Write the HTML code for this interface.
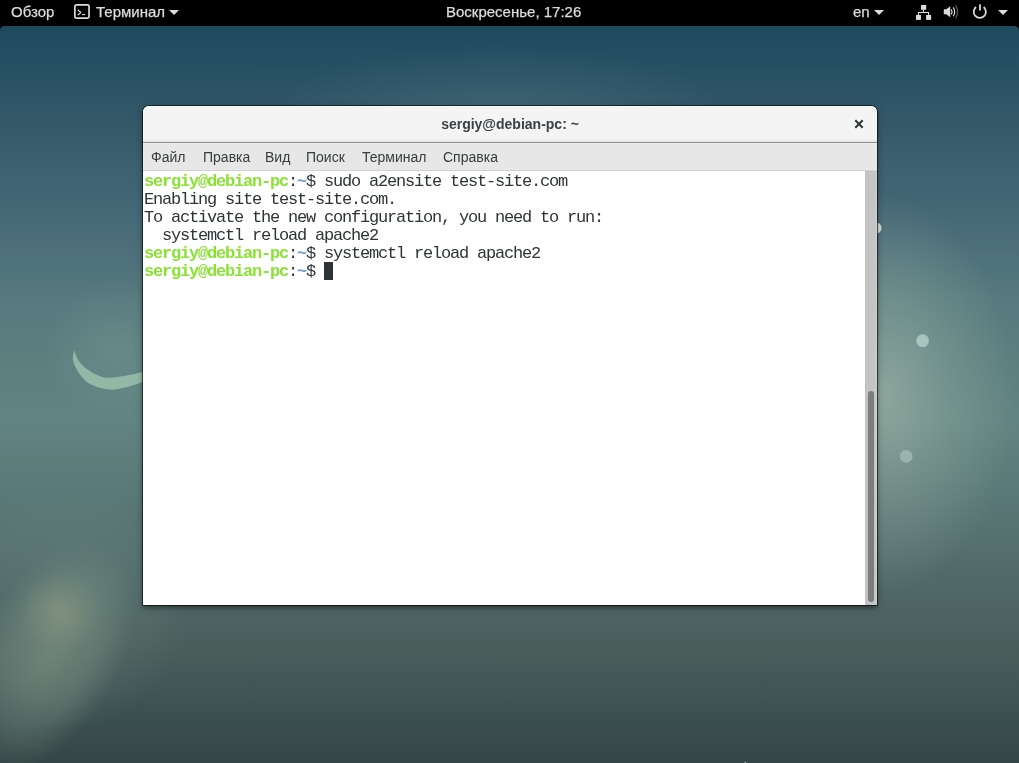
<!DOCTYPE html>
<html><head><meta charset="utf-8">
<style>
html,body{margin:0;padding:0;width:1019px;height:763px;overflow:hidden;background:#000;}
body{position:relative;font-family:"Liberation Sans",sans-serif;}
#bg{position:absolute;left:0;top:0;width:1019px;height:763px;overflow:hidden;
background:
radial-gradient(ellipse 135px 200px at 880px 395px,rgba(178,196,180,0.55) 0%,rgba(165,185,170,0.3) 50%,rgba(150,170,160,0) 100%),
radial-gradient(ellipse 230px 70px at 500px 115px,rgba(90,125,135,0.35) 0%,rgba(90,125,135,0) 100%),
linear-gradient(180deg,#1f4a5e 26px,#234d61 50px,#335969 120px,#446776 205px,#567a7e 300px,#628482 420px,#577473 520px,#4a5e5c 645px,#3f5353 700px,#344545 763px);}
.glow{position:absolute;border-radius:50%;}
#g1{left:-20px;top:530px;width:140px;height:250px;transform:rotate(28deg);background:radial-gradient(closest-side,rgba(140,160,140,0.5),rgba(130,155,140,0.32) 60%,rgba(130,155,140,0));}
#g2{left:20px;top:572px;width:80px;height:80px;background:radial-gradient(closest-side,rgba(185,178,135,0.28),rgba(185,178,135,0));}
#g4{left:45px;top:280px;width:140px;height:140px;background:radial-gradient(closest-side,rgba(150,185,175,0.2),rgba(150,185,175,0));}
#g3{left:-60px;top:480px;width:250px;height:250px;background:radial-gradient(closest-side,rgba(120,150,140,0.25),rgba(120,150,140,0.12) 70%,rgba(120,150,140,0));}
#corners{position:absolute;left:0;top:26px;width:1019px;height:8px;}
#panel{position:absolute;left:0;top:0;width:1019px;height:26px;background:#000;color:#dcdcdc;font-size:15px;-webkit-text-stroke:0.25px #dcdcdc;will-change:transform;}
.pt{position:absolute;top:4px;line-height:16px;white-space:nowrap;}
#win{position:absolute;left:143px;top:106px;width:734px;height:499px;background:#fff;border-radius:6px 6px 0 0;overflow:hidden;
box-shadow:0 0 0 1px rgba(0,0,0,0.55),0 3px 4px rgba(0,0,0,0.3),0 2px 8px rgba(0,0,0,0.25);will-change:transform;}
#title{position:absolute;left:0;top:0;width:734px;height:36px;background:linear-gradient(180deg,#f4f4f4 0,#f4f4f4 33px,#ececec 34px,#e2e2e2 36px);border-bottom:1px solid #8e8e8e;}
#ttext{position:absolute;left:0;width:734px;top:10px;text-align:center;font-weight:bold;font-size:14px;color:#3a3f41;line-height:16px;}
#menu{position:absolute;left:0;top:37px;width:734px;height:27px;background:linear-gradient(180deg,#ededed 0,#ededed 1px,#e7e7e7 1px,#e7e7e7 26px,#e9e9e9 26px);border-bottom:1px solid #d0d0d0;}
.mi{position:absolute;top:6px;font-size:14px;color:#373c3e;line-height:16px;}
#term{position:absolute;left:0;top:65px;width:722px;height:434px;background:#fff;}
#sb{position:absolute;left:722px;top:65px;width:12px;height:434px;background:linear-gradient(90deg,#bdbdbd 0,#c3c3c3 1px,#c5c5c5 10px,#cdd1d1 12px);}
#thumb{position:absolute;left:3px;top:220px;width:6px;height:211px;background:#7b7c7c;border-radius:3px;}
pre{margin:0;position:absolute;left:1px;top:2px;font-family:"Liberation Mono",monospace;font-size:17px;letter-spacing:-1.2px;line-height:18px;color:#2e3436;}
.g{color:#8ae234;font-weight:bold;}
.b{color:#729fcf;font-weight:bold;}
.cur{display:inline-block;width:9px;height:18px;vertical-align:top;position:relative;top:-1px;background:#2e3436;}
</style></head><body>
<div id="bg"><div class="glow" id="g3"></div><div class="glow" id="g4"></div><div class="glow" id="g1"></div><div class="glow" id="g2"></div><svg style="position:absolute;left:0;top:0" width="1019" height="763">
<path d="M74.2 350.2 C74.0 352.0 72.2 356.9 73.3 361.2 C74.4 365.5 78.0 371.9 81.1 375.9 C84.2 379.9 87.1 382.7 92.1 385.0 C97.1 387.3 104.9 389.4 111.0 389.6 C117.1 389.9 123.5 387.8 128.8 386.5 C134.1 385.2 140.6 382.8 143.0 382.0 L143.0 372.0 C139.9 372.7 130.7 375.1 124.2 376.0 C117.7 376.9 110.1 378.5 104.0 377.4 C97.9 376.3 91.8 372.5 87.5 369.6 C83.2 366.8 80.5 363.5 78.3 360.3 C76.1 357.1 74.9 351.9 74.2 350.2 Z" fill="#93b8a5"/>
<circle cx="876" cy="228" r="5.5" fill="#d5e2df"/>
<circle cx="922.6" cy="340.7" r="6.4" fill="#a9c3bf"/>
<circle cx="906.2" cy="456.4" r="6.3" fill="#9cb4ae"/>
<path d="M744.6 763 L745.2 761.3 L746 763 Z" fill="#cfd4d3"/>
</svg></div>
<svg id="corners" width="1019" height="8"><path d="M0 0 H4.5 A4.5 4.5 0 0 0 0 4.5 Z" fill="#000"/><path d="M1019 0 H1014.5 A4.5 4.5 0 0 1 1019 4.5 Z" fill="#000"/></svg>
<div id="panel">
  <div class="pt" style="left:11px;">Обзор</div>
  <svg style="position:absolute;left:74px;top:4px" width="16" height="15" viewBox="0 0 16 15">
    <rect x="0.85" y="0.85" width="14.2" height="13.3" rx="1.6" fill="none" stroke="#dcdcdc" stroke-width="1.7"/>
    <path d="M4.2 6.2 L6.8 8.5 L4.2 10.8" fill="none" stroke="#dcdcdc" stroke-width="1.2" stroke-linecap="round"/>
    <rect x="8" y="10" width="3.1" height="1.1" fill="#dcdcdc"/>
  </svg>
  <div class="pt" style="left:96px;">Терминал</div>
  <svg style="position:absolute;left:169px;top:10px" width="10" height="5"><path d="M0 0 L10 0 L5 5 Z" fill="#dcdcdc"/></svg>
  <div class="pt" style="left:446px;">Воскресенье, 17:26</div>
  <div class="pt" style="left:853px;">en</div>
  <svg style="position:absolute;left:874px;top:10px" width="10" height="5"><path d="M0 0 L10 0 L5 5 Z" fill="#dcdcdc"/></svg>
  <svg style="position:absolute;left:0;top:0" width="1019" height="26">
    <rect x="921" y="5" width="5.2" height="4.8" fill="#dcdcdc"/>
    <rect x="916" y="15" width="4.9" height="4.9" fill="#dcdcdc"/>
    <rect x="926.1" y="15" width="5" height="4.9" fill="#dcdcdc"/>
    <path d="M923.5 9.5 V12.5 M918.5 15 V12.5 H928.6 V15" fill="none" stroke="#dcdcdc" stroke-width="1.1"/>
    <path d="M943.8 9.3 H946.3 L950.2 6.3 V17.3 L946.3 14.3 H943.8 Z" fill="#dcdcdc"/>
    <path d="M951.3 9.2 Q952.8 11.8 951.3 14.4" fill="none" stroke="#dcdcdc" stroke-width="1.2"/>
    <path d="M953.3 7.4 Q956 11.8 953.3 16.2" fill="none" stroke="#dcdcdc" stroke-width="1.2"/>
    <path d="M955.6 5.4 Q959.6 11.8 955.6 18.2" fill="none" stroke="#5a5a5a" stroke-width="1.3"/>
    <path d="M976 7 A6.1 6.1 0 1 0 983.6 7" fill="none" stroke="#dcdcdc" stroke-width="1.8"/>
    <path d="M980 4.2 V10.6" fill="none" stroke="#dcdcdc" stroke-width="1.8"/>
  </svg>
  <svg style="position:absolute;left:998px;top:10px" width="10" height="5"><path d="M0 0 L10 0 L5 5 Z" fill="#dcdcdc"/></svg>
</div>
<div id="win">
  <div id="title"><div id="ttext">sergiy@debian-pc: ~</div></div>
  <div id="menu">
    <div class="mi" style="left:8px;">Файл</div>
    <div class="mi" style="left:60px;">Правка</div>
    <div class="mi" style="left:122px;">Вид</div>
    <div class="mi" style="left:163px;">Поиск</div>
    <div class="mi" style="left:219px;">Терминал</div>
    <div class="mi" style="left:300px;">Справка</div>
  </div>
  <div id="term">
<pre><span class="g">sergiy@debian-pc</span>:<span class="b">~</span>$ sudo a2ensite test-site.com
Enabling site test-site.com.
To activate the new configuration, you need to run:
  systemctl reload apache2
<span class="g">sergiy@debian-pc</span>:<span class="b">~</span>$ systemctl reload apache2
<span class="g">sergiy@debian-pc</span>:<span class="b">~</span>$ <span class="cur"> </span></pre>
  </div>
  <div id="sb"><div id="thumb"></div></div>
  <svg style="position:absolute;left:711px;top:13px" width="10" height="10" viewBox="0 0 10 10"><path d="M1.3 1.3 L8.7 8.7 M8.7 1.3 L1.3 8.7" stroke="#2e3436" stroke-width="2"/></svg>
</div>
</body></html>
